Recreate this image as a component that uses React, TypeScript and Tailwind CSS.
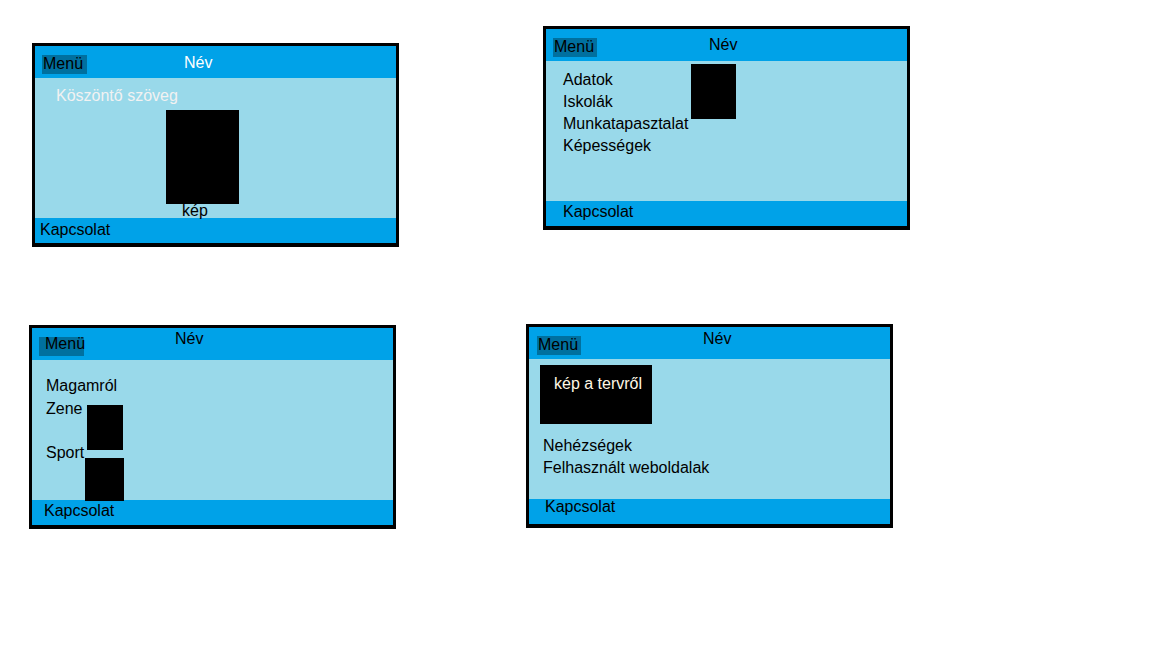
const font = { fontFamily: '"Liberation Sans", Arial, sans-serif' };

function Frame({ pos, menu, menuText, nev, nevColor, footer, children }: any) {
  return (
    <div className={`absolute w-[367px] h-[204px] border-[3px] border-b-4 border-black bg-[#99d9ea] flex flex-col ${pos}`}>
      <div className="h-[32px] bg-[#00a2e8] flex items-start shrink-0">
        <div className={`h-[19px] bg-[#00709f] text-black text-[16px] leading-[19px] ${menu}`}>
          <span className={menuText}>Menü</span>
        </div>
        <span className={`text-[16px] leading-[20px] ${nevColor} ${nev}`}>Név</span>
      </div>
      <div className="relative h-[140px] shrink-0">{children}</div>
      <div className={`h-[25px] bg-[#00a2e8] text-black text-[16px] shrink-0 ${footer}`}>Kapcsolat</div>
    </div>
  );
}

export default function App() {
  return (
    <div className="relative w-[1152px] h-[648px] bg-white overflow-hidden" style={font}>
      <Frame
        pos="left-[32px] top-[43px]"
        menu="ml-[7px] mt-[9px] w-[45px] pl-px"
        menuText="relative -top-px"
        nev="ml-[97px] mt-[7px]"
        nevColor="text-white"
        footer="pl-[5px] pt-[2px] leading-[20px]"
      >
        <div className="flex flex-col">
          <div className="mt-[8px] ml-[21px] text-[16px] leading-[20px] text-[#f2f2f2]">Köszöntő szöveg</div>
          <div className="mt-[4px] ml-[131px] w-[73px] h-[94px] bg-black" />
          <div className="ml-[147px] text-[16px] leading-[14px] text-black relative z-10">kép</div>
        </div>
      </Frame>

      <Frame
        pos="left-[543px] top-[26px]"
        menu="ml-[7px] mt-[9px] w-[44px] pl-px"
        menuText="relative -top-px"
        nev="ml-[112px] mt-[6px]"
        nevColor="text-black"
        footer="pl-[17px] pt-[1px] leading-[20px]"
      >
        <div className="flex flex-col mt-[8px] ml-[17px] text-[16px] leading-[22px] text-black">
          <span>Adatok</span>
          <span>Iskolák</span>
          <span>Munkatapasztalat</span>
          <span>Képességek</span>
        </div>
        <div className="absolute left-[145px] top-[3px] w-[45px] h-[55px] bg-black" />
      </Frame>

      <Frame
        pos="left-[29px] top-[325px]"
        menu="ml-[7px] mt-[9px] w-[45px] pl-[6px]"
        menuText="relative -top-[3px]"
        nev="ml-[91px] mt-[1px]"
        nevColor="text-black"
        footer="pl-[12px] pt-[1px] leading-[20px]"
      >
        <div className="flex flex-col mt-[16px] ml-[14px] text-[16px] leading-[20px] text-black">
          <span>Magamról</span>
          <span className="mt-[3px]">Zene</span>
          <span className="mt-[24px]">Sport</span>
        </div>
        <div className="absolute left-[55px] top-[45px] w-[36px] h-[45px] bg-black" />
        <div className="absolute left-[53px] top-[98px] w-[39px] h-[43px] bg-black z-10" />
      </Frame>

      <Frame
        pos="left-[526px] top-[324px]"
        menu="ml-[8px] mt-[9px] w-[44px] pl-px"
        menuText="relative -top-px"
        nev="ml-[122px] mt-[2px]"
        nevColor="text-black"
        footer="pl-[16px] leading-[16px]"
      >
        <div className="flex flex-col">
          <div className="mt-[6px] ml-[11px] w-[112px] h-[59px] bg-black pt-[9px] pl-[14px] text-[16px] leading-[20px] text-[#fff8e6]">
            kép a tervről
          </div>
          <div className="flex flex-col mt-[11px] ml-[14px] text-[16px] leading-[22px] text-black">
            <span>Nehézségek</span>
            <span>Felhasznált weboldalak</span>
          </div>
        </div>
      </Frame>
    </div>
  );
}
